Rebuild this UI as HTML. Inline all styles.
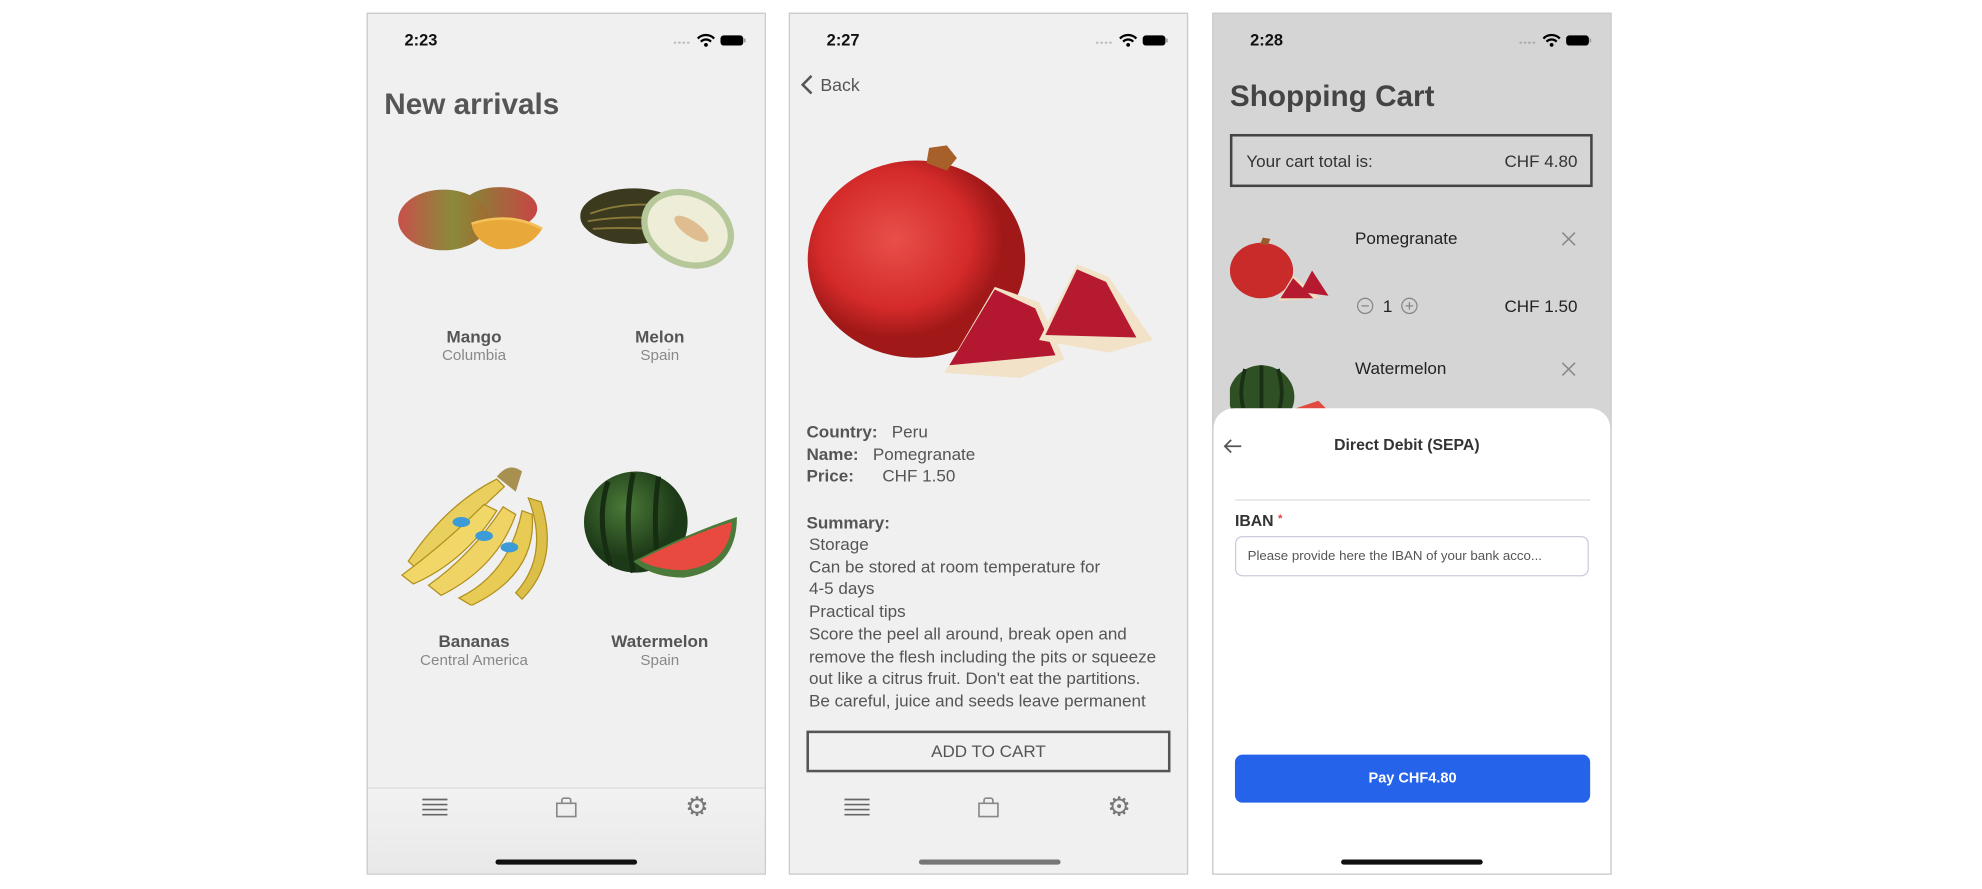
<!DOCTYPE html>
<html><head><meta charset="utf-8"><style>
html,body{margin:0;padding:0;background:#fff;width:1982px;height:888px;overflow:hidden}
#s{position:absolute;left:0;top:0;width:1568px;height:703px;transform:scale(1.26403);transform-origin:0 0;font-family:"Liberation Sans",sans-serif}
.a{position:absolute}
.ph{position:absolute;top:10px;width:314px;height:680px;border:1px solid #c9c9c9;background:#f0f0f0;overflow:hidden}
.time{position:absolute;top:13px;left:29px;font-weight:bold;font-size:13px;color:#111}
.c{text-align:center;transform:translateX(-50%)}
.nm{font-weight:bold;font-size:13.5px;color:#555}
.sb{font-size:12px;color:#888}
.tx{font-size:13.5px;color:#555;line-height:17.7px}
</style></head><body><div id="s">

<!-- PHONE 1 -->
<div class="ph" style="left:290px">
 <div class="time">2:23</div>
 <svg class="a" style="left:242px;top:14px" width="60" height="14" viewBox="0 0 60 14"><g fill="#bbb"><rect x="0" y="8" width="2" height="1.5"/><rect x="3.5" y="8" width="2" height="1.5"/><rect x="7" y="8" width="2" height="1.5"/><rect x="10.5" y="8" width="2" height="1.5"/></g><path d="M19 5.5a9 9 0 0 1 13 0M21.5 8a5.5 5.5 0 0 1 8 0" stroke="#000" stroke-width="1.8" fill="none"/><circle cx="25.5" cy="10.5" r="1.5"/><rect x="37" y="3" width="18" height="8" rx="2.5" fill="#000"/><rect x="55.5" y="5.5" width="1.3" height="3" fill="#999"/></svg>
 <div class="a" style="left:13px;top:58px;font-size:23.5px;font-weight:bold;color:#555">New arrivals</div>
 <svg class="a" style="left:22px;top:128px" width="120" height="70" viewBox="0 0 120 70"><defs><linearGradient id="mg" x1="0" x2="1"><stop offset="0" stop-color="#c8504a"/><stop offset=".6" stop-color="#8a8a3a"/><stop offset="1" stop-color="#a06a30"/></linearGradient><linearGradient id="mg2" x1="0" x2="1"><stop offset="0" stop-color="#7f8a35"/><stop offset="1" stop-color="#c84545"/></linearGradient></defs><ellipse cx="82" cy="26" rx="30" ry="17" fill="url(#mg2)"/><ellipse cx="38" cy="35" rx="36" ry="24" fill="url(#mg)"/><path d="M60 38 Q90 28 116 42 Q105 60 80 58 Q62 52 60 38Z" fill="#e9a93a"/><path d="M60 38 Q90 28 116 42" stroke="#f3c35a" stroke-width="2" fill="none"/></svg>
 <svg class="a" style="left:168px;top:130px" width="125" height="75" viewBox="0 0 125 75"><ellipse cx="42" cy="30" rx="42" ry="22" fill="#3b3a1f"/><path d="M8 28 Q40 16 80 24M6 34 Q40 28 82 34M10 40 Q44 38 78 42" stroke="#8a7a3a" stroke-width="1.5" fill="none"/><ellipse cx="85" cy="40" rx="38" ry="30" transform="rotate(25 85 40)" fill="#b6c79a"/><ellipse cx="85" cy="40" rx="33" ry="25" transform="rotate(25 85 40)" fill="#eeeed8"/><ellipse cx="88" cy="40" rx="16" ry="6" transform="rotate(35 88 40)" fill="#e0bd90"/></svg>
 <div class="a c nm" style="left:84px;top:248px">Mango</div>
 <div class="a c sb" style="left:84px;top:263px">Columbia</div>
 <div class="a c nm" style="left:231px;top:248px">Melon</div>
 <div class="a c sb" style="left:231px;top:263px">Spain</div>
 <svg class="a" style="left:22px;top:348px" width="125" height="120" viewBox="0 0 125 120"><g stroke="#b09020" stroke-width="1"><path d="M10 85 Q40 40 80 20 L86 26 Q55 55 18 92Z" fill="#e9cf5e"/><path d="M5 96 Q40 70 70 40 L80 45 Q55 85 14 103Z" fill="#f0d768"/><path d="M26 104 Q60 80 85 42 L95 48 Q80 90 36 112Z" fill="#efd465"/><path d="M50 114 Q90 95 100 45 L108 48 Q112 95 60 120Z" fill="#e8cb55"/><path d="M95 110 Q122 80 105 35 L115 38 Q130 85 100 115Z" fill="#dcbf48"/></g><ellipse cx="52" cy="54" rx="7" ry="4" fill="#3d9bd8"/><ellipse cx="70" cy="65" rx="7" ry="4" fill="#3d9bd8"/><ellipse cx="90" cy="74" rx="7" ry="4" fill="#3d9bd8"/><path d="M80 18 Q90 6 100 14 L95 30Z" fill="#a89050"/></svg>
 <svg class="a" style="left:170px;top:360px" width="125" height="100" viewBox="0 0 125 100"><defs><radialGradient id="wm" cx=".4" cy=".35"><stop offset="0" stop-color="#4b7a38"/><stop offset="1" stop-color="#1d3a18"/></radialGradient></defs><ellipse cx="42" cy="42" rx="41" ry="40" fill="url(#wm)"/><path d="M20 10 Q10 40 22 76M40 3 Q32 40 40 82M60 6 Q55 40 60 80" stroke="#162d12" stroke-width="4" fill="none"/><path d="M40 73 Q85 50 122 38 Q122 80 80 86 Q55 86 40 73Z" fill="#4c7a3a"/><path d="M45 72 Q85 52 118 42 Q116 76 80 80 Q58 80 45 72Z" fill="#e94a3f"/></svg>
 <div class="a c nm" style="left:84px;top:489px">Bananas</div>
 <div class="a c sb" style="left:84px;top:504px">Central America</div>
 <div class="a c nm" style="left:231px;top:489px">Watermelon</div>
 <div class="a c sb" style="left:231px;top:504px">Spain</div>
 <div class="a" style="left:0;top:612px;width:314px;height:68px;background:linear-gradient(#f2f2f2,#e8e8e8);border-top:1px solid #ddd"></div>
 <svg class="a" style="left:43px;top:620px" width="20" height="16"><path d="M0 1.5h20M0 5.5h20M0 9.5h20M0 13.5h20" stroke="#666" stroke-width="1.3"/></svg>
 <svg class="a" style="left:148px;top:619px" width="18" height="18"><path d="M1.5 5.5h15v10.5h-15zM5.5 5.5V3a1.5 1.5 0 0 1 1.5-1.5h4a1.5 1.5 0 0 1 1.5 1.5v2.5" stroke="#888" stroke-width="1.3" fill="none"/></svg>
 <div class="a" style="left:251px;top:617px;font-size:21px;color:#777;line-height:22px">⚙</div>
 <div class="a" style="left:101px;top:669px;width:112px;height:4px;border-radius:2px;background:#111"></div>
</div>

<!-- PHONE 2 -->
<div class="ph" style="left:624px">
 <div class="time">2:27</div>
 <svg class="a" style="left:242px;top:14px" width="60" height="14" viewBox="0 0 60 14"><g fill="#bbb"><rect x="0" y="8" width="2" height="1.5"/><rect x="3.5" y="8" width="2" height="1.5"/><rect x="7" y="8" width="2" height="1.5"/><rect x="10.5" y="8" width="2" height="1.5"/></g><path d="M19 5.5a9 9 0 0 1 13 0M21.5 8a5.5 5.5 0 0 1 8 0" stroke="#000" stroke-width="1.8" fill="none"/><circle cx="25.5" cy="10.5" r="1.5"/><rect x="37" y="3" width="18" height="8" rx="2.5" fill="#000"/><rect x="55.5" y="5.5" width="1.3" height="3" fill="#999"/></svg>
 <svg class="a" style="left:7px;top:47px" width="12" height="18"><path d="M10 2L3 9l7 7" stroke="#555" stroke-width="2" fill="none"/></svg>
 <div class="a" style="left:24px;top:48px;font-size:14px;color:#555">Back</div>
 <svg class="a" style="left:12px;top:98px" width="292" height="192" viewBox="0 0 292 192"><defs><radialGradient id="pg" cx=".4" cy=".4"><stop offset="0" stop-color="#e8504a"/><stop offset=".7" stop-color="#d42a2a"/><stop offset="1" stop-color="#a01818"/></radialGradient></defs><ellipse cx="88" cy="96" rx="86" ry="78" fill="url(#pg)"/><path d="M96 20 L98 8 L112 6 L120 16 L112 26Z" fill="#a8602a"/><path d="M110 186 L150 118 L185 130 L205 175 L170 190Z" fill="#f2e2c8"/><path d="M114 180 L150 120 L182 135 L198 172Z" fill="#b41830"/><path d="M185 160 L215 100 L240 110 L275 160 L240 170Z" fill="#f2e2c8"/><path d="M190 156 L215 104 L238 114 L262 158Z" fill="#b51a30"/></svg>
 <div class="a tx" style="left:13px;top:322px"><b>Country:</b>&nbsp;&nbsp; Peru<br><b>Name:</b>&nbsp;&nbsp; Pomegranate<br><b>Price:</b>&nbsp;&nbsp;&nbsp;&nbsp;&nbsp; CHF 1.50</div>
 <div class="a tx" style="left:13px;top:394px"><b>Summary:</b></div>
 <div class="a tx" style="left:15px;top:411px">Storage<br>Can be stored at room temperature for<br>4-5 days<br>Practical tips<br>Score the peel all around, break open and<br>remove the flesh including the pits or squeeze<br>out like a citrus fruit. Don't eat the partitions.<br>Be careful, juice and seeds leave permanent</div>
 <div class="a" style="left:0;top:553px;width:314px;height:16px;background:#f0f0f0"></div>
 <div class="a" style="left:13px;top:567px;width:284px;height:29px;border:2px solid #555;text-align:center;line-height:29px;font-size:13.5px;color:#555">ADD TO CART</div>
 <svg class="a" style="left:43px;top:620px" width="20" height="16"><path d="M0 1.5h20M0 5.5h20M0 9.5h20M0 13.5h20" stroke="#666" stroke-width="1.3"/></svg>
 <svg class="a" style="left:148px;top:619px" width="18" height="18"><path d="M1.5 5.5h15v10.5h-15zM5.5 5.5V3a1.5 1.5 0 0 1 1.5-1.5h4a1.5 1.5 0 0 1 1.5 1.5v2.5" stroke="#888" stroke-width="1.3" fill="none"/></svg>
 <div class="a" style="left:251px;top:617px;font-size:21px;color:#777;line-height:22px">⚙</div>
 <div class="a" style="left:102px;top:669px;width:112px;height:4px;border-radius:2px;background:#777"></div>
</div>

<!-- PHONE 3 -->
<div class="ph" style="left:959px;background:#d5d5d5">
 <div class="time">2:28</div>
 <svg class="a" style="left:242px;top:14px" width="60" height="14" viewBox="0 0 60 14"><g fill="#aaa"><rect x="0" y="8" width="2" height="1.5"/><rect x="3.5" y="8" width="2" height="1.5"/><rect x="7" y="8" width="2" height="1.5"/><rect x="10.5" y="8" width="2" height="1.5"/></g><path d="M19 5.5a9 9 0 0 1 13 0M21.5 8a5.5 5.5 0 0 1 8 0" stroke="#000" stroke-width="1.8" fill="none"/><circle cx="25.5" cy="10.5" r="1.5"/><rect x="37" y="3" width="18" height="8" rx="2.5" fill="#000"/><rect x="55.5" y="5.5" width="1.3" height="3" fill="#999"/></svg>
 <div class="a" style="left:13px;top:52px;font-size:23.5px;font-weight:bold;color:#444">Shopping Cart</div>
 <div class="a" style="left:13px;top:95px;width:283px;height:38px;border:2px solid #444"></div>
 <div class="a" style="left:26px;top:109px;font-size:13.5px;color:#333">Your cart total is:</div>
 <div class="a" style="right:26px;top:109px;font-size:13.5px;color:#333">CHF 4.80</div>
 <svg class="a" style="left:13px;top:175px" width="80" height="60" viewBox="0 0 80 60"><ellipse cx="25" cy="28" rx="25" ry="22" fill="#c92a2a"/><path d="M24 7l2-5 6 1-2 5z" fill="#9a5a2a"/><path d="M38 52 L50 32 L60 40 L72 50Z" fill="#f0dcc0"/><path d="M40 50 L50 34 L58 42 L66 50Z" fill="#b51a30"/><path d="M56 45 L65 28 L78 48Z" fill="#b51a30"/></svg>
 <div class="a" style="left:112px;top:170px;font-size:13.5px;color:#222">Pomegranate</div>
 <svg class="a" style="left:275px;top:172px" width="12" height="12"><path d="M1 1l10 10M11 1L1 11" stroke="#888" stroke-width="1.2"/></svg>
 <svg class="a" style="left:113px;top:224px" width="60" height="14"><circle cx="7" cy="7" r="6" stroke="#888" fill="none"/><path d="M4 7h6" stroke="#888"/><circle cx="42" cy="7" r="6" stroke="#888" fill="none"/><path d="M39 7h6M42 4v6" stroke="#888"/></svg>
 <div class="a" style="left:134px;top:224px;font-size:13.5px;color:#222">1</div>
 <div class="a" style="right:26px;top:224px;font-size:13.5px;color:#222">CHF 1.50</div>
 <svg class="a" style="left:13px;top:276px" width="80" height="40"><ellipse cx="25" cy="27" rx="26" ry="25" fill="#2f4f25"/><path d="M12 5Q6 25 12 40M25 2V40M38 5Q44 25 38 40" stroke="#1a3014" stroke-width="3" fill="none"/><path d="M40 40 L70 30 L80 40Z" fill="#e04a40"/></svg>
 <div class="a" style="left:112px;top:273px;font-size:13.5px;color:#222">Watermelon</div>
 <svg class="a" style="left:275px;top:275px" width="12" height="12"><path d="M1 1l10 10M11 1L1 11" stroke="#888" stroke-width="1.2"/></svg>
 <div class="a" style="left:0;top:312px;width:314px;height:380px;background:#fff;border-radius:16px 16px 0 0"></div>
 <svg class="a" style="left:7px;top:335px" width="16" height="14"><path d="M15 7H2M7 2L2 7l5 5" stroke="#555" stroke-width="1.4" fill="none"/></svg>
 <div class="a c" style="left:153px;top:334px;font-size:12.5px;font-weight:bold;color:#333;white-space:nowrap">Direct Debit (SEPA)</div>
 <div class="a" style="left:17px;top:384px;width:281px;height:1px;background:#ddd"></div>
 <div class="a" style="left:17px;top:394px;font-size:12.5px;font-weight:bold;color:#333">IBAN <span style="color:#e53e3e;font-size:9px;vertical-align:top">*</span></div>
 <div class="a" style="left:17px;top:413px;width:278px;height:30px;border:1.5px solid #ccd;border-radius:6px;font-size:10.5px;color:#555;line-height:30px;text-indent:9px;white-space:nowrap;overflow:hidden">Please provide here the IBAN of your bank acco...</div>
 <div class="a" style="left:17px;top:586px;width:281px;height:38px;background:#2563eb;border-radius:6px;text-align:center;line-height:38px;font-size:11.5px;font-weight:bold;color:#fff">Pay CHF4.80</div>
 <div class="a" style="left:101px;top:669px;width:112px;height:4px;border-radius:2px;background:#111"></div>
</div>
</div></body></html>
